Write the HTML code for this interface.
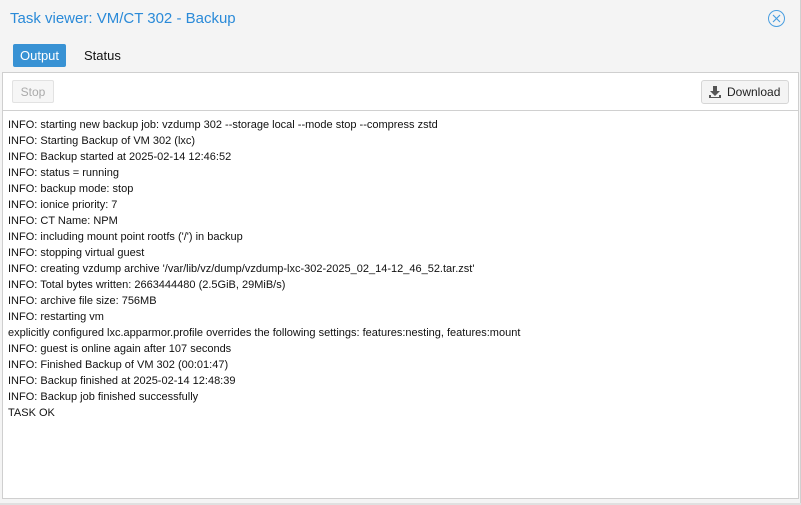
<!DOCTYPE html>
<html><head><style>
body{margin:0;width:801px;height:505px;background:#e0e0e0;font-family:"Liberation Sans",Arial,sans-serif;overflow:hidden;position:relative}
.win{position:absolute;left:0;top:0;width:800px;height:503px;background:#f4f4f4;border-right:1px solid #d0d0d0}
.title{position:absolute;left:10px;top:10px;font-size:15px;color:#2a8ad8}
.close{position:absolute;left:768px;top:10px;width:17px;height:17px;border:1px solid #4a9ee0;border-radius:50%;box-sizing:border-box}
.tab1{position:absolute;left:13px;top:44px;width:53px;height:23px;background:#3892d4;border-radius:2px;color:#fff;font-size:13px;line-height:23px;text-align:center}
.tab2{position:absolute;left:84px;top:44px;font-size:13px;line-height:23px;color:#111}
.panel{position:absolute;left:2px;top:72px;width:795px;height:425px;background:#fff;border:1px solid #cfcfcf}
.tb{position:absolute;left:0;top:0;right:0;height:37px;border-bottom:1px solid #d0d0d0}
.stop{position:absolute;left:9px;top:7px;width:42px;height:23px;border:1px solid #e2e2e2;background:#f6f6f6;border-radius:2px;color:#aaa;font-size:12px;line-height:23px;text-align:center;box-sizing:border-box}
.dl{position:absolute;left:698px;top:7px;width:88px;height:24px;border:1px solid #d6d6d6;background:#f4f4f4;border-radius:3px;font-size:12px;line-height:22px;color:#222;box-sizing:border-box}
.log{position:absolute;left:5px;top:44px;font-size:11px;line-height:16px;color:#111;white-space:pre}
</style></head><body>
<div class="win">
<div class="title">Task viewer: VM/CT 302 - Backup</div>
<div class="close"><svg width="15" height="15" style="position:absolute;left:0;top:0"><path d="M4 4L11 11M11 4L4 11" stroke="#4a9ee0" stroke-width="1.2"/></svg></div>
<div class="tab1">Output</div>
<div class="tab2">Status</div>
<div class="panel">
<div class="tb">
<div class="stop">Stop</div>
<div class="dl"><svg width="14" height="14" style="position:absolute;left:6px;top:4px"><path d="M5 1h4v5h3l-5 5-5-5h3z M1 10h2v2h8v-2h2v3H1z" fill="#555"/></svg><span style="position:absolute;left:25px">Download</span></div>
</div>
<div class="log">INFO: starting new backup job: vzdump 302 --storage local --mode stop --compress zstd
INFO: Starting Backup of VM 302 (lxc)
INFO: Backup started at 2025-02-14 12:46:52
INFO: status = running
INFO: backup mode: stop
INFO: ionice priority: 7
INFO: CT Name: NPM
INFO: including mount point rootfs ('/') in backup
INFO: stopping virtual guest
INFO: creating vzdump archive '/var/lib/vz/dump/vzdump-lxc-302-2025_02_14-12_46_52.tar.zst'
INFO: Total bytes written: 2663444480 (2.5GiB, 29MiB/s)
INFO: archive file size: 756MB
INFO: restarting vm
explicitly configured lxc.apparmor.profile overrides the following settings: features:nesting, features:mount
INFO: guest is online again after 107 seconds
INFO: Finished Backup of VM 302 (00:01:47)
INFO: Backup finished at 2025-02-14 12:48:39
INFO: Backup job finished successfully
TASK OK</div>
</div>
</div>
</body></html>
